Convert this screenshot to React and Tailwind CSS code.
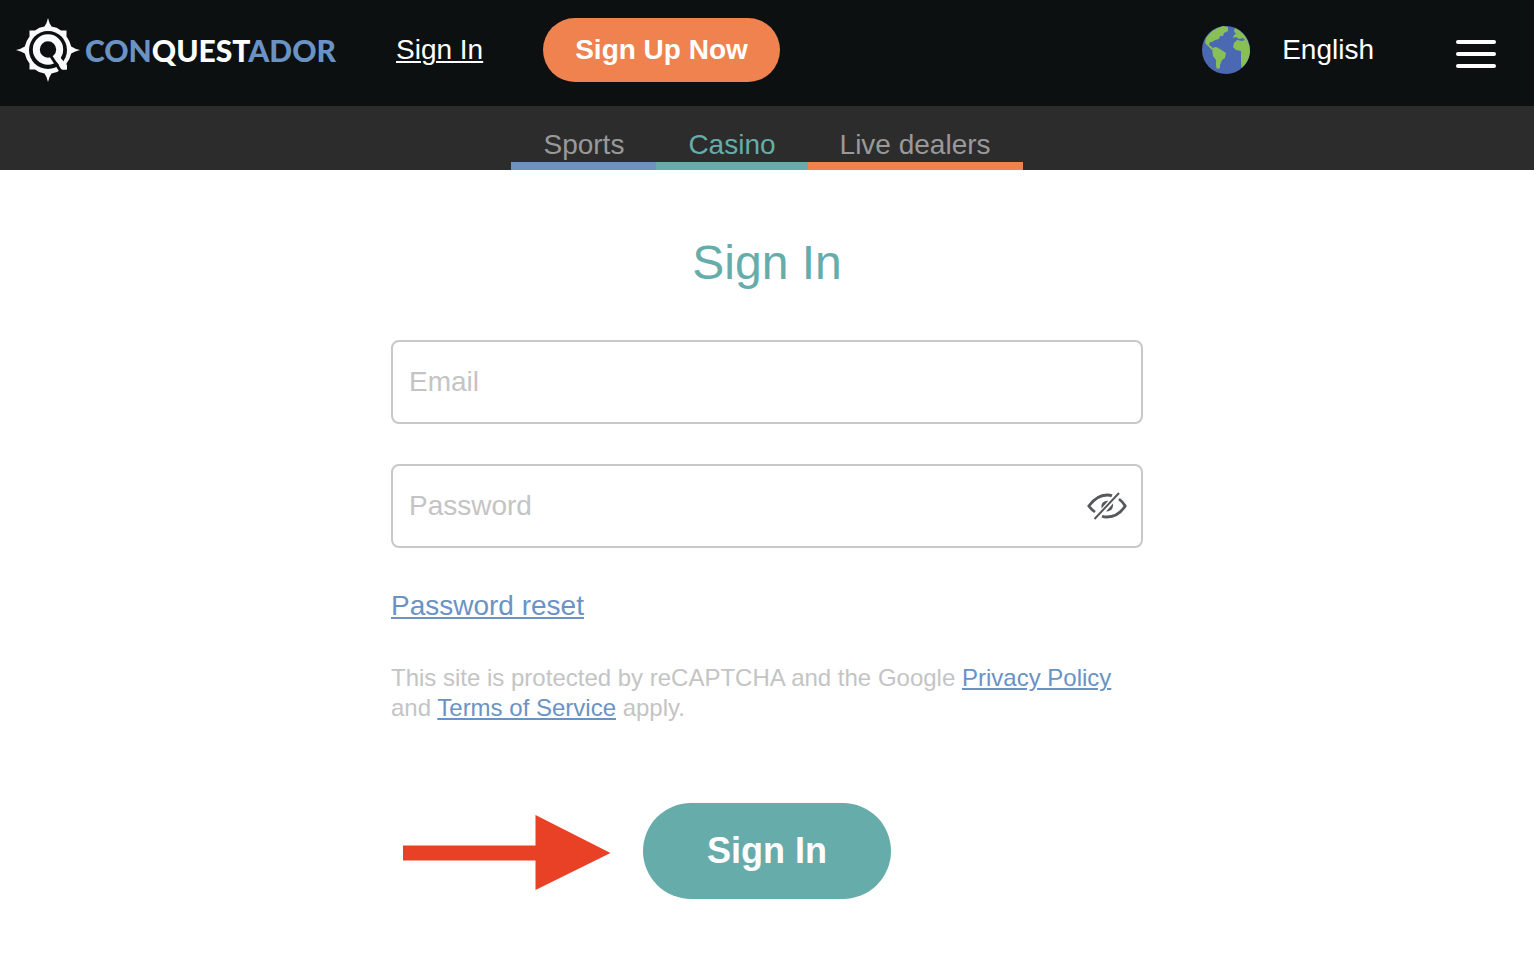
import React, { useState } from 'react';

const tabs = [
    { name: 'Sports', href: '#sports', className: 'border-[#6a93c4] text-[#999999]' },
    { name: 'Casino', href: '#casino', className: 'border-[#66acaa] text-[#66acaa]' },
    { name: 'Live dealers', href: '#live', className: 'border-[#ef824f] text-[#999999]' },
];

function Logo() {
    return (
        <a href="#home" className="flex items-center gap-[5px]">
            <svg viewBox="0 0 64 64" className="h-16 w-16" aria-hidden="true">
                <path
                    fill="#f8fafc"
                    d="M32 0Q33 5 35.5 8.4Q41 9 45 12.5H50.5V18.5Q54 23 55.2 28.5Q59 31 64 32Q59 33 55.2 35.5Q54 41 50.5 45.5V51.5H45Q41 55 35.5 55.6Q33 59 32 64Q31 59 28.5 55.6Q23 55 19 51.5H13.5V45.5Q10 41 8.8 35.5Q5 33 0 32Q5 31 8.8 28.5Q10 23 13.5 18.5V12.5H19Q23 9 28.5 8.4Q31 5 32 0Z"
                />
                <circle cx="32" cy="32" r="19" fill="#0d1011" />
                <circle cx="32" cy="31.5" r="11.7" fill="none" stroke="#f8fafc" strokeWidth="7" />
                <path d="M39 38L43.5 38.5L51 47.5V51.5H46.5L37.5 40Z" fill="#f8fafc" />
                <path d="M33.5 36L45 53.5" stroke="#0d1011" strokeWidth="3" />
            </svg>
            <span className="font-['Lato',sans-serif] text-[30px] leading-8 font-black text-[#6a93c4]">
                CON<span className="text-white">QUEST</span>ADOR
            </span>
        </a>
    );
}

function Globe() {
    return (
        <svg viewBox="0 0 48 48" className="h-12 w-12" aria-hidden="true">
            <circle cx="24" cy="24" r="24" fill="#4a69b2" />
            <g fill="#88c057">
                <path d="M4 12Q10 3 21 0L26 1L26 5L22 7L21 10L18 10L17 13L13 14L10 16L8 16L7 19L10 21L10 24L6 20L3 17Z" />
                <path d="M10 22L14 21L18 23L24 27L23 32L20 34L18 39L18 42L15 43L14 40L14 34L11 30Z" />
                <path d="M33 2Q44 7 47.5 20L48 26Q47 36 39.5 42L39 36L39 31L39 25L34 24L31 21L32 17L35 14L40 15L43 14L41 12L37 13L34 11L31 12L32 9L34 8L32 5Z" />
            </g>
        </svg>
    );
}

function EyeOff() {
    return (
        <svg viewBox="0 0 40 28" className="h-7 w-10" fill="none" stroke="#55585a" strokeWidth="2.8" aria-hidden="true">
            <path d="M8 20Q4 17 1.8 14Q10 3 20 3Q23 3 25 3.8" />
            <path d="M32 7Q36 10 38.2 14Q31 25 20 25Q17 25 15 24.2" />
            <path d="M14.5 16.5Q13 9 21.5 8.5Z" fill="#55585a" stroke="none" />
            <path d="M26 11.5Q27 19 19 19.5Z" fill="#55585a" stroke="none" />
            <path d="M7.5 27L32 1" strokeWidth="2" />
        </svg>
    );
}

function App() {
    const [formData, setFormData] = useState({ email: '', password: '' });
    const [showPassword, setShowPassword] = useState(false);

    const handleChange = (e) => {
        setFormData({ ...formData, [e.target.name]: e.target.value });
    };

    const inputClass =
        'h-[84px] w-full rounded-lg border-2 border-[#c8c8c8] bg-white px-4 text-[28px] text-[#333333] placeholder:text-[#c4c4c4] focus:outline-none focus:border-[#66acaa]';
    const linkClass = 'text-[#6a93c4] underline decoration-2 underline-offset-2';

    return (
        <div className="min-h-screen bg-white font-['Liberation_Sans',Arial,sans-serif]">
            <header className="flex items-center justify-between bg-[#0d1011] pt-[18px] pr-[38px] pb-6 pl-4 text-[28px] leading-8 text-white">
                <div className="flex items-center gap-[60px]">
                    <Logo />
                    <a href="#signin" className="underline decoration-2 underline-offset-2">Sign In</a>
                    <button type="button" className="h-16 rounded-full bg-[#ef824f] px-8 font-bold">
                        Sign Up Now
                    </button>
                </div>
                <div className="flex items-center gap-[82px]">
                    <button type="button" className="flex items-center gap-8">
                        <Globe />
                        <span>English</span>
                    </button>
                    <button type="button" aria-label="Menu" className="flex flex-col gap-2 pt-2">
                        <span className="h-1 w-10 rounded-full bg-white" />
                        <span className="h-1 w-10 rounded-full bg-white" />
                        <span className="h-1 w-10 rounded-full bg-white" />
                    </button>
                </div>
            </header>

            <nav className="flex justify-center bg-[#2c2c2c] text-[28px] leading-8">
                {tabs.map((tab) => (
                    <a key={tab.name} href={tab.href} className={`border-b-8 px-8 pt-[23px] pb-px ${tab.className}`}>
                        {tab.name}
                    </a>
                ))}
            </nav>

            <main className="mx-auto max-w-[752px] pt-16 pb-16">
                <h1 className="text-center text-5xl leading-[58px] text-[#66acaa]">Sign In</h1>
                <form className="mt-12" onSubmit={(e) => e.preventDefault()}>
                    <div className="flex flex-col gap-10">
                        <input
                            type="email"
                            name="email"
                            aria-label="Email"
                            placeholder="Email"
                            className={inputClass}
                            value={formData.email}
                            onChange={handleChange}
                        />
                        <div className="relative">
                            <input
                                type={showPassword ? 'text' : 'password'}
                                name="password"
                                aria-label="Password"
                                placeholder="Password"
                                className={inputClass}
                                value={formData.password}
                                onChange={handleChange}
                            />
                            <button
                                type="button"
                                aria-label="Show password"
                                className="absolute inset-y-0 right-4"
                                onClick={() => setShowPassword(!showPassword)}
                            >
                                <EyeOff />
                            </button>
                        </div>
                    </div>

                    <p className="mt-10 text-[28px] leading-[35px]">
                        <a href="#reset" className={linkClass}>Password reset</a>
                    </p>

                    <p className="mt-10 text-2xl leading-[30px] text-[#c4c4c4]">
                        This site is protected by reCAPTCHA and the Google{' '}
                        <a href="#privacy" className={linkClass}>Privacy Policy</a> and{' '}
                        <a href="#terms" className={linkClass}>Terms of Service</a> apply.
                    </p>

                    <div className="mt-20 grid grid-cols-[1fr_auto_1fr] items-center">
                        <svg viewBox="0 0 208 80" className="mr-8 h-20 w-52 justify-self-end" aria-hidden="true">
                            <path d="M0 34.5H132.5V4L207.5 42L132.5 79V49.5H0Z" fill="#e94125" />
                        </svg>
                        <button type="submit" className="h-24 rounded-full bg-[#66acaa] px-16 text-4xl font-bold text-white">
                            Sign In
                        </button>
                    </div>
                </form>
            </main>
        </div>
    );
}

export default App;
